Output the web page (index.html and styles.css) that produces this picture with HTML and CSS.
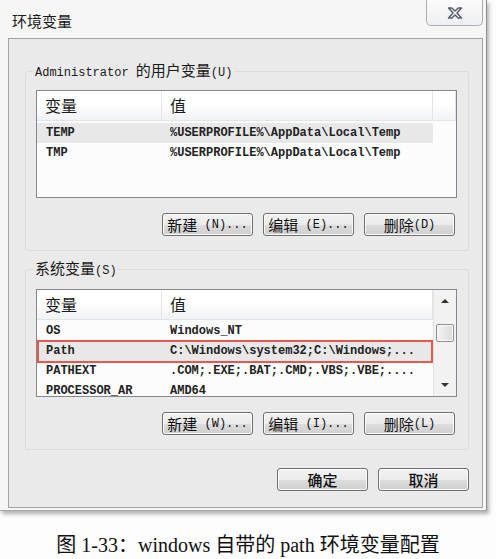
FILE: index.html
```html
<!DOCTYPE html>
<html lang="zh-CN">
<head>
<meta charset="utf-8">
<title>环境变量</title>
<link rel="stylesheet" href="styles.css">
</head>
<body>
<div class="window">
  <div class="titlebar">
    <span class="title">环境变量</span>
    <div class="close">
      <svg width="16" height="12" viewBox="0 0 16 12"><path d="M1.5 1 L4.8 1 L8 4 L11.2 1 L14.5 1 L10 6 L14.5 11 L11.2 11 L8 8 L4.8 11 L1.5 11 L6 6 Z" fill="#eef0f3" stroke="#555b6a" stroke-width="1.4" stroke-linejoin="round"/></svg>
    </div>
  </div>
  <div class="client">
    <fieldset class="group">
      <legend><span class="mono">Administrator </span>的用户变量<span class="mono">(U)</span></legend>
      <div class="list">
        <div class="hdr"><div class="c1">变量</div><div class="c2">值</div><div class="c3"></div></div>
        <div class="rows">
          <div class="row sel"><div class="c1">TEMP</div><div class="c2">%USERPROFILE%\AppData\Local\Temp</div></div>
          <div class="row"><div class="c1">TMP</div><div class="c2">%USERPROFILE%\AppData\Local\Temp</div></div>
        </div>
      </div>
      <div class="btns">
        <div class="btn">新建<span class="mono"> (N)...</span></div>
        <div class="btn">编辑<span class="mono"> (E)...</span></div>
        <div class="btn">删除<span class="mono">(D)</span></div>
      </div>
    </fieldset>
    <fieldset class="group g2">
      <legend>系统变量<span class="mono">(S)</span></legend>
      <div class="list list2">
        <div class="main">
          <div class="hdr"><div class="c1">变量</div><div class="c2">值</div></div>
          <div class="rows">
            <div class="row"><div class="c1">OS</div><div class="c2">Windows_NT</div></div>
            <div class="row sel mark"><div class="c1">Path</div><div class="c2">C:\Windows\system32;C:\Windows;...</div></div>
            <div class="row"><div class="c1">PATHEXT</div><div class="c2">.COM;.EXE;.BAT;.CMD;.VBS;.VBE;....</div></div>
            <div class="row"><div class="c1">PROCESSOR_AR</div><div class="c2">AMD64</div></div>
          </div>
        </div>
        <div class="sbar">
          <div class="arrow up"></div>
          <div class="thumb"></div>
          <div class="arrow down"></div>
        </div>
      </div>
      <div class="btns">
        <div class="btn">新建<span class="mono"> (W)...</span></div>
        <div class="btn">编辑<span class="mono"> (I)...</span></div>
        <div class="btn">删除<span class="mono">(L)</span></div>
      </div>
    </fieldset>
    <div class="btns footer">
      <div class="btn strong">确定</div>
      <div class="btn strong">取消</div>
    </div>
  </div>
</div>
<p class="caption">图 1-33：windows 自带的 path 环境变量配置</p>
</body>
</html>
```
FILE: styles.css
```css
* { box-sizing: border-box; }

body {
  margin: 0;
  background: #fdfdfd;
  font-family: "Noto Sans CJK SC", sans-serif;
  color: #111;
}

.mono {
  font-family: "Liberation Mono", "Noto Sans CJK SC", monospace;
  font-size: 12px;
}

.window {
  width: 487px;
  background: #f6f6f6;
  border-right: 1px solid #8e8e8e;
  border-bottom: 1px solid #a8a8a8;
  box-shadow: 2px 3px 4px rgba(0, 0, 0, 0.3);
  padding: 0 3px 2px 8px;
}

.titlebar {
  height: 38px;
  display: flex;
  justify-content: space-between;
  align-items: flex-start;
}

.title {
  font-size: 15px;
  line-height: 18px;
  padding: 12px 0 0 4px;
  color: #1a1a1a;
}

.close {
  width: 57px;
  height: 26px;
  border: 1px solid #a9adb3;
  border-top: none;
  border-radius: 0 0 5px 5px;
  background: linear-gradient(#fbfbfb, #eeeff1);
  display: flex;
  justify-content: center;
  align-items: center;
  padding-top: 1px;
}

.client {
  border: 1px solid #a3a3a3;
  background: #eaeaea;
  padding: 23px 13px 16px 16px;
}

.group {
  margin: 0;
  border: 1px solid #d8dee2;
  border-radius: 3px;
  padding: 9px 11px 14px 10px;
  min-width: 0;
}

.group legend {
  font-size: 15px;
  line-height: 16px;
  padding: 0 2px;
  margin-left: -3px;
  color: #1a1a1a;
}

.g2 {
  margin-top: 9px;
  padding-top: 10px;
}

.list {
  height: 108px;
  border: 1px solid #828790;
  background: #fcfcfc;
  overflow: hidden;
}

.list2 {
  display: flex;
}

.list2 .main {
  width: 396px;
}

.hdr {
  height: 30px;
  display: flex;
  background: linear-gradient(#ffffff 0%, #ffffff 45%, #f1f2f4 100%);
  border-bottom: 1px solid #e2e4e7;
  font-size: 16px;
  line-height: 29px;
  color: #1a1a1a;
}

.hdr .c1, .hdr .c2, .hdr .c3 {
  border-right: 1px solid #e2e5e9;
}

.c1 { width: 125px; padding-left: 8px; flex: none; }
.c2 { width: 271px; padding-left: 8px; flex: none; }
.c3 { width: 23px; flex: none; }

.rows {
  padding-top: 2px;
}

.list2 .rows {
  padding-top: 1px;
}

.row {
  display: flex;
  height: 20px;
  width: 396px;
  font-family: "Liberation Mono", monospace;
  font-size: 12px;
  font-weight: bold;
  line-height: 20px;
  color: #222;
  white-space: nowrap;
}

.row .c1 { padding-left: 9px; }

.row.sel {
  background: #e8e8e8;
}

.row.mark {
  position: relative;
}

.row.mark::after {
  content: "";
  position: absolute;
  left: 0;
  right: 0;
  top: -1px;
  bottom: -2px;
  border: 2px solid #e8574c;
}

.sbar {
  width: 23px;
  flex: none;
  background: #f2f2f2;
  border-left: 1px solid #e2e2e2;
  display: flex;
  flex-direction: column;
  align-items: center;
}

.arrow {
  height: 22px;
  width: 100%;
  display: flex;
  justify-content: center;
  align-items: center;
}

.arrow::before {
  content: "";
  border-left: 4px solid transparent;
  border-right: 4px solid transparent;
}

.arrow.up::before { border-bottom: 4px solid #333; }
.arrow.down::before { border-top: 4px solid #333; }

.arrow.down { margin-top: auto; }

.thumb {
  margin-top: 12px;
  width: 18px;
  height: 18px;
  border: 1px solid #8f8f8f;
  border-radius: 2px;
  background: linear-gradient(90deg, #f4f4f4, #dcdcdc);
  box-shadow: inset 0 0 0 1px #fbfbfb;
}

.btns {
  display: flex;
  justify-content: flex-end;
  gap: 10px;
  margin-top: 15px;
  padding-right: 2px;
}

.btn {
  width: 91px;
  height: 23px;
  border: 1px solid #707070;
  border-radius: 3px;
  background: linear-gradient(#f2f2f2 0%, #ebebeb 50%, #dddddd 51%, #cfcfcf 100%);
  box-shadow: inset 0 0 0 1px #fbfbfb;
  display: flex;
  justify-content: center;
  align-items: center;
  font-size: 15px;
  line-height: 20px;
  color: #111;
  white-space: pre;
}

.footer {
  margin-top: 18px;
  padding-right: 0;
}

.strong {
  font-weight: 500;
}

.caption {
  margin: 22px 0 0;
  text-align: center;
  font-family: "Liberation Serif", "Noto Sans CJK SC", serif;
  font-size: 20px;
  line-height: 24px;
  color: #111;
}
```
